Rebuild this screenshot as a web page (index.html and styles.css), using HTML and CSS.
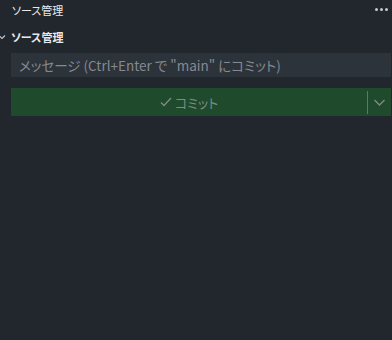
FILE: index.html
```html
<!DOCTYPE html>
<html lang="ja">
<head>
<meta charset="utf-8">
<link rel="stylesheet" href="styles.css">
</head>
<body>
<div class="pane">
  <div class="titlebar">
    <span class="title">ソース管理</span>
    <span class="more"><i></i><i></i><i></i></span>
  </div>
  <div class="section">
    <svg class="chev" width="8" height="6" viewBox="0 0 8 6"><path d="M1 1.5 L4 4.5 L7 1.5" fill="none" stroke="#c5cad0" stroke-width="1.1"/></svg>
    <span class="section-title">ソース管理</span>
  </div>
  <div class="body">
    <div class="input">メッセージ (Ctrl+Enter で "main" にコミット)</div>
    <div class="button">
      <div class="main">
        <svg width="12" height="10" viewBox="0 0 12 10"><path d="M1 5.5 L4 8.5 L11 1" fill="none" stroke="#7f8c82" stroke-width="1.3"/></svg>
        <span>コミット</span>
      </div>
      <div class="sep"></div>
      <div class="drop">
        <svg width="11" height="7" viewBox="0 0 11 7"><path d="M0.5 1 L5.5 6 L10.5 1" fill="none" stroke="#7f8c82" stroke-width="1.3"/></svg>
      </div>
    </div>
  </div>
</div>
</body>
</html>
```

FILE: styles.css
```css
html, body {
  margin: 0;
  padding: 0;
  background: #22272e;
  height: 100%;
}
.pane {
  font-family: "Noto Sans CJK JP", "Noto Sans", sans-serif;
  font-feature-settings: "palt";
  color: #e6eaef;
}
.titlebar {
  height: 20px;
  display: flex;
  align-items: center;
  justify-content: space-between;
  padding: 0 4px 0 12px;
}
.title {
  font-size: 11px;
  line-height: 18px;
}
.more {
  display: flex;
  gap: 2px;
  margin-top: -2px;
}
.more i {
  width: 3px;
  height: 3px;
  border-radius: 50%;
  background: #c5cad0;
}
.section {
  height: 22px;
  margin-top: 6px;
  display: flex;
  align-items: center;
}
.chev {
  margin: 0 4px 0 -2px;
}
.section-title {
  font-size: 11px;
  font-weight: bold;
  margin-left: 1px;
}
.body {
  padding: 5px 1px 0 11px;
}
.input {
  height: 24px;
  background: #2d333b;
  color: #858a90;
  font-size: 13.5px;
  line-height: 24px;
  padding-left: 8px;
}
.button {
  margin-top: 11px;
  height: 28px;
  background: #1f4a2c;
  display: flex;
  align-items: center;
  color: #7f8c82;
  font-size: 13px;
}
.main {
  flex: 1;
  display: flex;
  align-items: center;
  justify-content: center;
  gap: 3px;
}
.sep {
  width: 1px;
  height: 23px;
  background: #5d7a64;
}
.drop {
  width: 23px;
  display: flex;
  justify-content: center;
  align-items: center;
}
```
